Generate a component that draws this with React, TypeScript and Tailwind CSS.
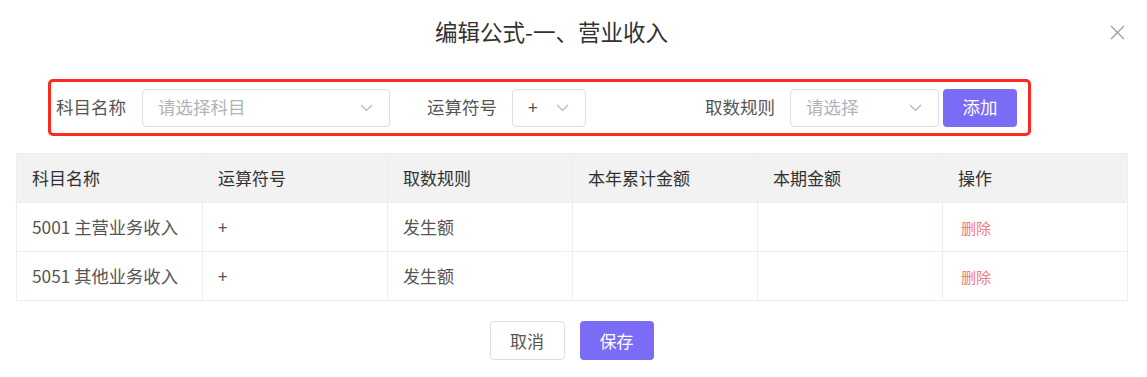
import React from 'react'

const font = { fontFamily: '"Noto Sans CJK SC", "Noto Sans", sans-serif' }

function Chevron() {
  return (
    <svg width="13" height="8" viewBox="0 0 13 8" fill="none" className="shrink-0">
      <polyline points="1,1 6.5,6.5 12,1" stroke="#b4b7bd" strokeWidth="1.2" fill="none" />
    </svg>
  )
}

interface SelectProps {
  width: string
  value?: string
  placeholder?: string
}

function FakeSelect({ width, value, placeholder }: SelectProps) {
  return (
    <div className={`${width} h-[38px] border border-[#dcdfe6] rounded-[4px] bg-white flex items-center justify-between pl-[15px] pr-[16px]`}>
      {value ? (
        <span className="text-[17.5px] text-[#555]">{value}</span>
      ) : (
        <span className="text-[17.5px] text-[#b0b3b9]">{placeholder}</span>
      )}
      <Chevron />
    </div>
  )
}

const headers = ['科目名称', '运算符号', '取数规则', '本年累计金额', '本期金额', '操作']

const rows = [
  { name: '5001 主营业务收入', op: '+', rule: '发生额' },
  { name: '5051 其他业务收入', op: '+', rule: '发生额' },
]

export default function App() {
  return (
    <div className="w-full bg-white pb-[17px]" style={font}>
      {/* Title */}
      <div className="relative h-[64px] flex items-center justify-center pr-[44px]">
        <span className="text-[22.5px] text-[#303133]">编辑公式-一、营业收入</span>
        <svg width="15" height="15" viewBox="0 0 15 15" className="absolute right-[22px] top-[25px]">
          <line x1="1" y1="1" x2="14" y2="14" stroke="#9a9ca2" strokeWidth="1.3" />
          <line x1="14" y1="1" x2="1" y2="14" stroke="#9a9ca2" strokeWidth="1.3" />
        </svg>
      </div>

      {/* Filter bar */}
      <div className="pt-[15px] pl-[48px]">
        <div className="w-[983px] h-[57px] border-[3px] border-[#fb2a1f] rounded-[5px] flex items-center pl-[5px]">
          <span className="text-[17.5px] text-[#555]">科目名称</span>
          <div className="ml-[16px]">
            <FakeSelect width="w-[248px]" placeholder="请选择科目" />
          </div>
          <span className="ml-[37px] text-[17.5px] text-[#555]">运算符号</span>
          <div className="ml-[15px]">
            <FakeSelect width="w-[74px]" value="+" />
          </div>
          <span className="ml-[119px] text-[17.5px] text-[#555]">取数规则</span>
          <div className="ml-[15px]">
            <FakeSelect width="w-[149px]" placeholder="请选择" />
          </div>
          <button className="ml-[4px] w-[74px] h-[38px] rounded-[4px] bg-[#7b6cf6] text-white text-[17.5px]">
            添加
          </button>
        </div>
      </div>

      {/* Table */}
      <div className="mt-[17px] mx-[16px] w-[1112px] border border-[#ebeef5]">
        <div className="grid grid-cols-6 h-[48px] bg-[#f2f2f3]">
          {headers.map((h, i) => (
            <div
              key={h}
              className={`flex items-center pl-[15px] text-[17px] text-[#303133] ${i > 0 ? 'border-l border-[#ebeef5]' : ''}`}
            >
              {h}
            </div>
          ))}
        </div>
        {rows.map((r) => (
          <div key={r.name} className="grid grid-cols-6 h-[49px] border-t border-[#ebeef5]">
            <div className="flex items-center pl-[15px] text-[17.3px] text-[#555]">{r.name}</div>
            <div className="flex items-center pl-[15px] text-[17px] text-[#555] border-l border-[#ebeef5]">{r.op}</div>
            <div className="flex items-center pl-[15px] text-[17px] text-[#555] border-l border-[#ebeef5]">{r.rule}</div>
            <div className="border-l border-[#ebeef5]" />
            <div className="border-l border-[#ebeef5]" />
            <div className="flex items-center pl-[18px] pt-[2px] text-[15px] text-[#f57a7a] border-l border-[#ebeef5]">删除</div>
          </div>
        ))}
      </div>

      {/* Footer */}
      <div className="mt-[20px] flex justify-center gap-[15px] pr-[4px]">
        <button className="w-[75px] h-[39px] rounded-[4px] border border-[#dcdfe6] bg-white text-[17px] text-[#555]">
          取消
        </button>
        <button className="w-[74px] h-[39px] rounded-[4px] bg-[#7b6cf6] text-white text-[17px]">
          保存
        </button>
      </div>
    </div>
  )
}
